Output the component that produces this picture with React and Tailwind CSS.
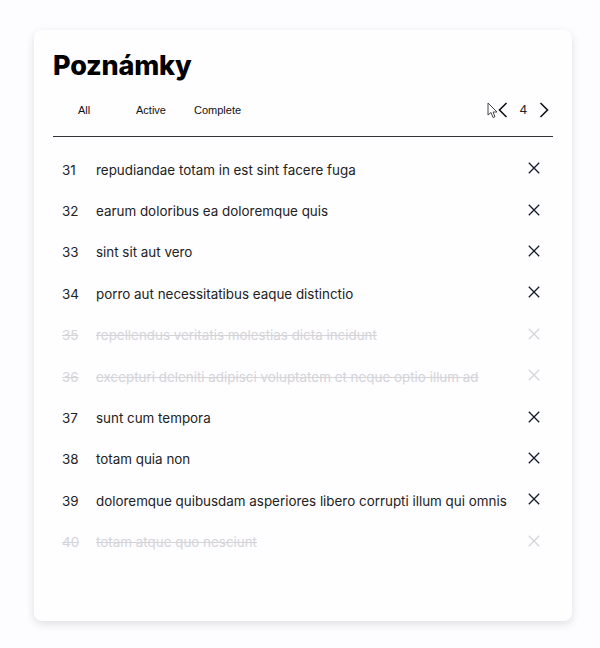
import { useState } from "react"

const notes = [
  { id: 31, title: "repudiandae totam in est sint facere fuga", done: false },
  { id: 32, title: "earum doloribus ea doloremque quis", done: false },
  { id: 33, title: "sint sit aut vero", done: false },
  { id: 34, title: "porro aut necessitatibus eaque distinctio", done: false },
  { id: 35, title: "repellendus veritatis molestias dicta incidunt", done: true },
  { id: 36, title: "excepturi deleniti adipisci voluptatem et neque optio illum ad", done: true },
  { id: 37, title: "sunt cum tempora", done: false },
  { id: 38, title: "totam quia non", done: false },
  { id: 39, title: "doloremque quibusdam asperiores libero corrupti illum qui omnis", done: false },
  { id: 40, title: "totam atque quo nesciunt", done: true },
]

function Cross({ faded }) {
  return (
    <svg width="12" height="12" viewBox="0 0 12 12" className={faded ? "text-[#d4d4d8]" : "text-gray-900"}>
      <path d="M0.8 0.8 L11.2 11.2 M11.2 0.8 L0.8 11.2" stroke="currentColor" strokeWidth="1.25" fill="none" />
    </svg>
  )
}

function Chevron({ dir }) {
  return (
    <svg width="10" height="16" viewBox="0 0 10 16">
      <path d={dir === "left" ? "M8.5 1 L1.5 8 L8.5 15" : "M1.5 1 L8.5 8 L1.5 15"} stroke="#111" strokeWidth="1.6" fill="none" />
    </svg>
  )
}

function Cursor() {
  return (
    <svg width="11" height="17" viewBox="0 0 11 17">
      <path d="M1 1 L1 13 L4 10.5 L6 15.5 L8 14.7 L6 10 L10 10 Z" fill="#fff" stroke="#444" strokeWidth="1" strokeLinejoin="round" />
    </svg>
  )
}

export default function App() {
  const [filter, setFilter] = useState("all")

  return (
    <div className="min-h-screen w-full bg-[#fdfcfe] pt-[30px] pl-[34px]" style={{ fontFamily: "Inter, 'Noto Sans', sans-serif" }}>
      <div className="w-[538px] h-[591px] bg-[#fefdff] rounded-lg shadow-[0_3px_10px_rgba(0,0,0,0.12)] px-[19px] pt-[18px]">
        <h1 className="text-[27px] font-extrabold text-black leading-[36px] tracking-[-0.2px]">Poznámky</h1>

        <div className="flex items-center justify-between mt-[11px] h-[30px] border-b border-[#333] pb-[11px] box-content">
          <div className="flex items-center text-[11px] text-[#111]" style={{ fontFamily: "'Liberation Sans', Arial, sans-serif" }}>
            <button onClick={() => setFilter("all")} className="ml-[25px] w-[58px] text-left">All</button>
            <button onClick={() => setFilter("active")} className="w-[58px] text-left">Active</button>
            <button onClick={() => setFilter("complete")} className="text-left">Complete</button>
          </div>
          <div className="flex items-center">
            <Cursor />
            <Chevron dir="left" />
            <span className="mx-[12px] text-[13px] text-[#222]" style={{ fontFamily: "'Liberation Sans', Arial, sans-serif" }}>4</span>
            <Chevron dir="right" />
            <span className="w-[4px]" />
          </div>
        </div>

        <ul className="mt-[12px]">
          {notes.map((n) => (
            <li key={n.id} className={"flex items-center h-[41.4px] text-[13.4px] " + (n.done ? "text-[#d4d4d8] line-through" : "text-[#222]")}>
              <span className="w-[43px] pl-[9px]">{n.id}</span>
              <span className="flex-1">{n.title}</span>
              <span className="w-[25px] flex justify-start mb-[3px]"><Cross faded={n.done} /></span>
            </li>
          ))}
        </ul>
      </div>
    </div>
  )
}
